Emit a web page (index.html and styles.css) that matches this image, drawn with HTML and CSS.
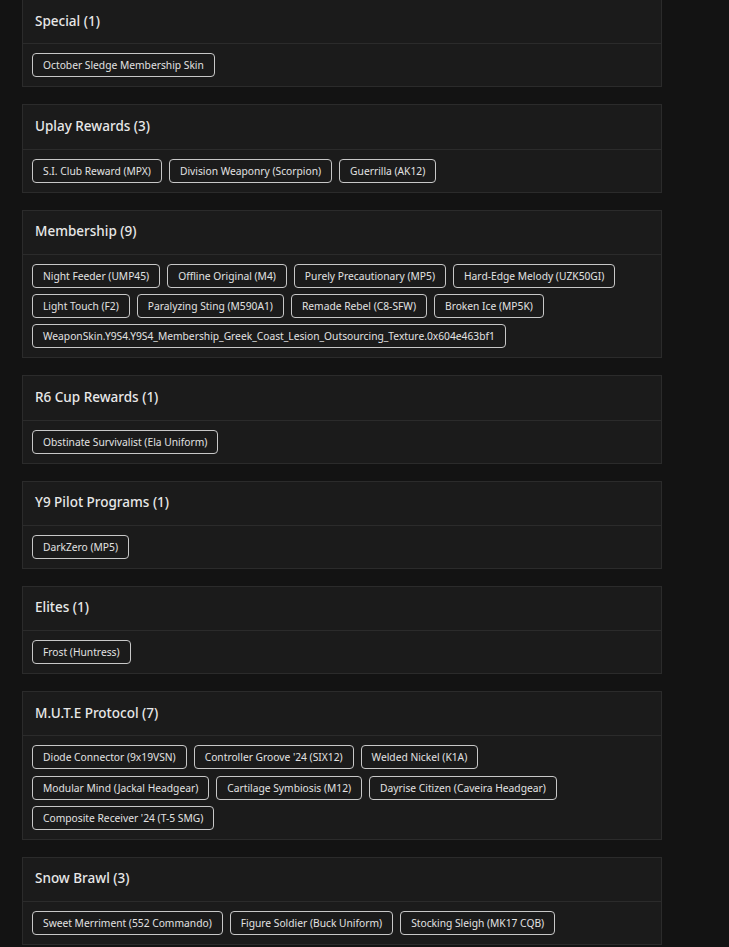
FILE: index.html
```html
<!DOCTYPE html>
<html lang="en">
<head>
    <meta charset="UTF-8">
    <meta name="viewport" content="width=device-width, initial-scale=1.0">
    <title>Skins</title>
    <link rel="stylesheet" href="styles.css">
</head>
<body>
    <div class="list">
        <div class="card">
            <div class="card-header">Special (1)</div>
            <div class="card-body">
                <span class="chip">October Sledge Membership Skin</span>
            </div>
        </div>

        <div class="card">
            <div class="card-header">Uplay Rewards (3)</div>
            <div class="card-body">
                <span class="chip">S.I. Club Reward (MPX)</span>
                <span class="chip">Division Weaponry (Scorpion)</span>
                <span class="chip">Guerrilla (AK12)</span>
            </div>
        </div>

        <div class="card">
            <div class="card-header">Membership (9)</div>
            <div class="card-body">
                <span class="chip">Night Feeder (UMP45)</span>
                <span class="chip">Offline Original (M4)</span>
                <span class="chip">Purely Precautionary (MP5)</span>
                <span class="chip">Hard-Edge Melody (UZK50GI)</span>
                <span class="chip">Light Touch (F2)</span>
                <span class="chip">Paralyzing Sting (M590A1)</span>
                <span class="chip">Remade Rebel (C8-SFW)</span>
                <span class="chip">Broken Ice (MP5K)</span>
                <span class="chip">WeaponSkin.Y9S4.Y9S4_Membership_Greek_Coast_Lesion_Outsourcing_Texture.0x604e463bf1</span>
            </div>
        </div>

        <div class="card">
            <div class="card-header">R6 Cup Rewards (1)</div>
            <div class="card-body">
                <span class="chip">Obstinate Survivalist (Ela Uniform)</span>
            </div>
        </div>

        <div class="card">
            <div class="card-header">Y9 Pilot Programs (1)</div>
            <div class="card-body">
                <span class="chip">DarkZero (MP5)</span>
            </div>
        </div>

        <div class="card">
            <div class="card-header">Elites (1)</div>
            <div class="card-body">
                <span class="chip">Frost (Huntress)</span>
            </div>
        </div>

        <div class="card">
            <div class="card-header">M.U.T.E Protocol (7)</div>
            <div class="card-body">
                <span class="chip">Diode Connector (9x19VSN)</span>
                <span class="chip">Controller Groove '24 (SIX12)</span>
                <span class="chip">Welded Nickel (K1A)</span>
                <span class="chip">Modular Mind (Jackal Headgear)</span>
                <span class="chip">Cartilage Symbiosis (M12)</span>
                <span class="chip">Dayrise Citizen (Caveira Headgear)</span>
                <span class="chip">Composite Receiver '24 (T-5 SMG)</span>
            </div>
        </div>

        <div class="card">
            <div class="card-header">Snow Brawl (3)</div>
            <div class="card-body">
                <span class="chip">Sweet Merriment (552 Commando)</span>
                <span class="chip">Figure Soldier (Buck Uniform)</span>
                <span class="chip">Stocking Sleigh (MK17 CQB)</span>
            </div>
        </div>
    </div>
</body>
</html>
```

FILE: styles.css
```css
body {
    font-family: 'Noto Sans', 'Open Sans', sans-serif;
    background-color: #131313;
    color: #e6e6e6;
    margin: 0;
}
.list {
    width: 640px;
    margin: -1px 0 0 22px;
    display: flex;
    flex-direction: column;
    gap: 17px;
}
.card {
    background-color: #1b1b1b;
    border: 1px solid #2b2b2b;
}
.card-header {
    height: 44.25px;
    box-sizing: border-box;
    display: flex;
    align-items: center;
    padding: 0 12px 2px;
    border-bottom: 1px solid #2b2b2b;
    font-size: 13.5px;
    font-weight: 500;
    color: #e8e8e8;
}
.card-body {
    display: flex;
    flex-wrap: wrap;
    gap: 6.25px 7px;
    padding: 9px 9px;
}
.chip {
    height: 24px;
    box-sizing: border-box;
    display: inline-flex;
    align-items: center;
    padding: 0 10px;
    border: 1px solid #c8c8c8;
    border-radius: 4px;
    font-size: 10.25px;
    color: #e2e2e2;
    white-space: nowrap;
}
```
